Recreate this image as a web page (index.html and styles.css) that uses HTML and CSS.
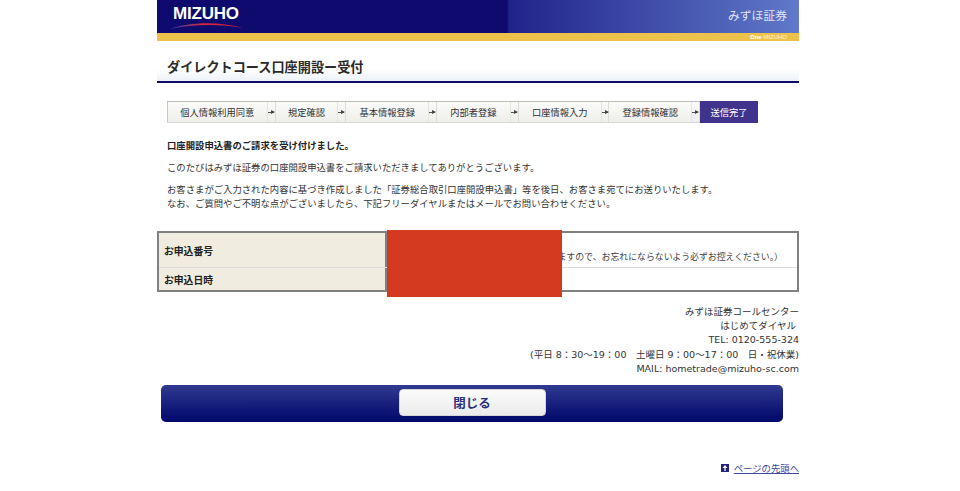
FILE: index.html
```html
<!DOCTYPE html>
<html lang="ja">
<head>
    <meta charset="UTF-8">
    <title>ダイレクトコース口座開設ー受付</title>
    <link rel="stylesheet" href="styles.css">
</head>
<body>
<div class="wrap">
    <div class="header">
        <div class="logo">
            <span class="logo-text">MIZUHO</span>
            <svg class="logo-swoosh" width="74" height="7" viewBox="0 0 74 7">
                <defs>
                    <linearGradient id="swoosh" x1="0" x2="1" y1="0" y2="0">
                        <stop offset="0" stop-color="#2a3aa8"/>
                        <stop offset=".45" stop-color="#d8243c"/>
                        <stop offset="1" stop-color="#c8203c"/>
                    </linearGradient>
                </defs>
                <path d="M0 7 C18 0 48 -1 74 6 C50 2 24 2 0 7 Z" fill="url(#swoosh)"/>
            </svg>
        </div>
        <div class="brand">みずほ証券</div>
    </div>
    <div class="gold"><span class="one"><b>One</b> MIZUHO</span></div>
    <h1 class="title">ダイレクトコース口座開設ー受付</h1>

    <ul class="steps">
        <li class="step s1">個人情報利用同意</li>
        <li class="arrow"></li>
        <li class="step s2">規定確認</li>
        <li class="arrow"></li>
        <li class="step s3">基本情報登録</li>
        <li class="arrow"></li>
        <li class="step s4">内部者登録</li>
        <li class="arrow"></li>
        <li class="step s3">口座情報入力</li>
        <li class="arrow"></li>
        <li class="step s3">登録情報確認</li>
        <li class="arrow"></li>
        <li class="step s7 current">送信完了</li>
    </ul>

    <div class="message">
        <p class="lead">口座開設申込書のご請求を受け付けました。</p>
        <p>このたびはみずほ証券の口座開設申込書をご請求いただきましてありがとうございます。</p>
        <p>お客さまがご入力された内容に基づき作成しました「証券総合取引口座開設申込書」等を後日、お客さま宛てにお送りいたします。<br>なお、ご質問やご不明な点がございましたら、下記フリーダイヤルまたはメールでお問い合わせください。</p>
    </div>

    <div class="result">
        <div class="row row1">
            <div class="label">お申込番号</div>
            <div class="value"><span class="note">お問い合わせの際に必要となりますので、お忘れにならないよう必ずお控えください。）</span></div>
        </div>
        <div class="row row2">
            <div class="label">お申込日時</div>
            <div class="value"></div>
        </div>
        <div class="mask"></div>
    </div>

    <div class="contact">
        <div>みずほ証券コールセンター</div>
        <div>はじめてダイヤル&nbsp;</div>
        <div>TEL: 0120-555-324</div>
        <div>(平日 8：30〜19：00　土曜日 9：00〜17：00　日・祝休業)</div>
        <div>MAIL: hometrade@mizuho-sc.com</div>
    </div>

    <div class="closebar">
        <a class="close" href="#">閉じる</a>
    </div>

    <div class="pagetop">
        <span class="up">
            <svg width="8" height="8" viewBox="0 0 8 8"><path d="M4 1 L6.5 4 H4.6 V7 H3.4 V4 H1.5 Z" fill="#fff"/></svg>
        </span>
        <a href="#">ページの先頭へ</a>
    </div>
</div>
</body>
</html>
```

FILE: styles.css
```css
*{box-sizing:border-box}
html,body,h1,p,ul,li{margin:0;padding:0}
ul{list-style:none}
body{
    background:#fff;
    color:#333;
    font:9.35px/14px "Noto Sans CJK JP", sans-serif;
    overflow:hidden;
}
a{color:#3f4aa0}

.wrap{
    width:642px;
    margin-left:157px;
}

/* header */
.header{
    height:33px;
    display:flex;
    justify-content:space-between;
    background:linear-gradient(90deg,#0e0a6e 0,#0e0a6e 350px,#20248a 352px,#6079c9 100%);
}
.logo{
    margin-left:13px;
    width:74px;
    display:flex;
    flex-direction:column;
    color:#fff;
}
.logo-text{
    font:bold 17px/16px "Liberation Sans", sans-serif;
    margin-top:6px;
    letter-spacing:-.2px;
    padding-left:3px;
}
.logo-swoosh{display:block;margin-top:0}
.brand{
    margin:7px 12px 0 0;
    color:#dfe3f4;
    font-size:11.8px;
    line-height:16px;
}
.gold{
    height:8px;
    background:#ecc14c;
    text-align:right;
    padding-right:12px;
    color:#fff3cc;
    font:6px/8px "Liberation Sans", sans-serif;
}
.one b{color:#fff}

.title{
    height:42px;
    padding:11px 0 0 10px;
    color:#2b2b2b;
    font-size:13.15px;
    font-weight:bold;
    line-height:30px;
    background:linear-gradient(#fff 0,#fff 28px,#eef3f8 39px);
    border-bottom:2px solid #0e0a6e;
}

/* steps */
.steps{
    display:flex;
    width:591px;
    height:22px;
    margin:18px 0 0 10px;
    border-top:1px solid #bdbdb8;
    border-bottom:1px solid #d6d6d2;
    background:linear-gradient(#fbfbfa,#eeeeea);
    text-align:center;
    font-size:9.25px;
    line-height:20px;
}
.step{color:#333}
.s1{width:100px;border-left:1px solid #c8c8c4}
.s2{width:62px}
.s3{width:82px}
.s4{width:73px}
.s7{width:58px}
.current{
    background:#3f338c;
    color:#fff;
    margin:-1px 0;
    height:22px;
    line-height:22px;
}
.arrow{
    width:9px;
    position:relative;
    border-left:1px solid #e4e4e0;
    border-right:1px solid #dcdcd8;
}
.arrow:before{
    content:"";
    position:absolute;
    left:0;
    top:10px;
    width:6px;
    height:1px;
    background:#555;
}
.arrow:after{
    content:"";
    position:absolute;
    left:3px;
    top:8px;
    border-left:4px solid #444;
    border-top:2.5px solid transparent;
    border-bottom:2.5px solid transparent;
}

/* message */
.message{
    margin:15px 0 0 10px;
    height:70px;
}
.message p{margin-bottom:8px}
.message .lead{font-weight:bold;color:#222}

/* result table */
.result{
    position:relative;
    width:642px;
    height:61px;
    margin-top:23px;
    border:2px solid #808080;
}
.row{display:flex}
.row1{height:35px;border-bottom:1px solid #dcdcd8}
.row2{height:22px}
.label{
    width:228px;
    padding-left:5px;
    background:#f0ecdf;
    border-right:2px solid #808080;
    font-weight:bold;
    color:#222;
    font-size:9.8px;
}
.row1 .label{line-height:36px}
.row2 .label{line-height:25px}
.value{flex:1;overflow:hidden}
.note{
    display:block;
    margin-top:17px;
    white-space:nowrap;
    float:right;
    margin-right:14px;
    font-size:8.9px;
    line-height:14px;
    color:#444;
}
.mask{
    position:absolute;
    left:228px;
    top:-3px;
    width:175px;
    height:67px;
    background:#d33a20;
}

/* contact */
.contact{
    margin-top:13px;
    text-align:right;
    line-height:14.2px;
    font-family:"DejaVu Sans", "Noto Sans CJK JP", sans-serif;
    font-size:9.5px;
}

/* close */
.closebar{
    display:flex;
    justify-content:center;
    width:622px;
    height:37px;
    margin:9px 0 0 4px;
    padding-top:4px;
    border-radius:5px;
    background:linear-gradient(#303a90,#00076a);
}
.close{
    width:147px;
    height:27px;
    border-radius:4px;
    border:1px solid #d5d5d8;
    background:linear-gradient(#fbfbfb,#ebebeb);
    color:#2a2f7a;
    font-size:12.5px;
    font-weight:bold;
    line-height:25px;
    text-align:center;
    text-decoration:none;
}

/* page top */
.pagetop{
    display:flex;
    justify-content:flex-end;
    align-items:center;
    gap:5px;
    margin-top:39px;
    line-height:14px;
}
.up{
    display:flex;
    width:8px;
    height:8px;
    background:#23237f;
}
```
